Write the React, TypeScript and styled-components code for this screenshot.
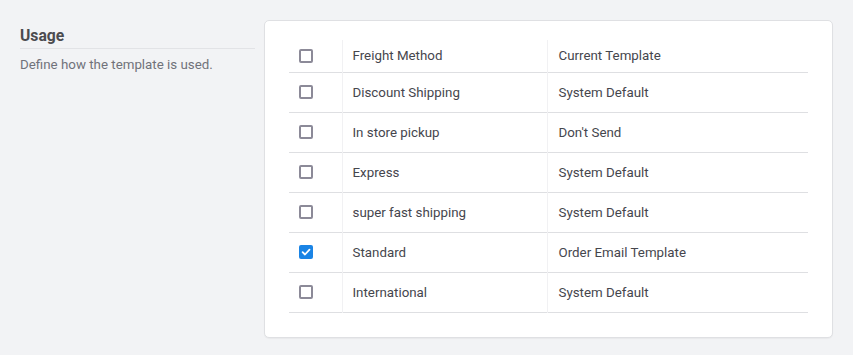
import styled, { createGlobalStyle } from "styled-components";

const GlobalStyle = createGlobalStyle`
  body {
    margin: 0;
    background: #f2f3f5;
    font-family: Roboto, "Liberation Sans", Arial, sans-serif;
  }
`;

type Row = { method: string; template: string; checked?: boolean };

const rows: Row[] = [
  { method: "Discount Shipping", template: "System Default" },
  { method: "In store pickup", template: "Don't Send" },
  { method: "Express", template: "System Default" },
  { method: "super fast shipping", template: "System Default" },
  { method: "Standard", template: "Order Email Template", checked: true },
  { method: "International", template: "System Default" },
];

const CheckBox = ({ checked }: { checked?: boolean }) => (
  <Box $checked={checked}>
    {checked && (
      <svg width="10" height="10" viewBox="0 0 10 10">
        <path
          d="M1.6 5.2 L4 7.5 L8.5 2.6"
          fill="none"
          stroke="#fff"
          strokeWidth="1.8"
          strokeLinecap="round"
          strokeLinejoin="round"
        />
      </svg>
    )}
  </Box>
);

export default function App() {
  return (
    <Page>
      <GlobalStyle />
      <Side>
        <Title>Usage</Title>
        <Desc>Define how the template is used.</Desc>
      </Side>
      <Card>
        <Table>
          <thead>
            <tr>
              <CheckCell as="th">
                <CheckBox />
              </CheckCell>
              <Cell as="th" $first>Freight Method</Cell>
              <Cell as="th">Current Template</Cell>
            </tr>
          </thead>
          <tbody>
            {rows.map((r) => (
              <tr key={r.method}>
                <CheckCell>
                  <CheckBox checked={r.checked} />
                </CheckCell>
                <Cell $first>{r.method}</Cell>
                <Cell>{r.template}</Cell>
              </tr>
            ))}
          </tbody>
        </Table>
      </Card>
    </Page>
  );
}

const Page = styled.div`
  display: flex;
  align-items: flex-start;
  gap: 9px;
  padding: 20px 20px 17px 20px;
`;

const Side = styled.div`
  width: 235px;
  padding-top: 6px;
  flex-shrink: 0;
`;

const Title = styled.h3`
  margin: 0;
  font-size: 15.7px;
  font-weight: 700;
  color: #4b4b4f;
  padding-bottom: 3px;
  border-bottom: 1px solid #e2e3e6;
`;

const Desc = styled.p`
  margin: 8px 0 0;
  font-size: 13.33px;
  color: #70727a;
`;

const Card = styled.div`
  flex: 1;
  background: #fff;
  border: 1px solid #dfe0e3;
  border-radius: 5px;
  box-shadow: 0 1px 1px rgba(0, 0, 0, 0.04);
  padding: 19px 24px 24px;
`;

const Table = styled.table`
  width: 100%;
  border-collapse: collapse;
  font-size: 13.33px;
  color: #45464d;

  tr {
    height: 40px;
    border-bottom: 1px solid #dedfe2;
  }
  thead tr {
    height: 32px;
  }
  th {
    font-weight: 400;
    text-align: left;
    padding-top: 0;
  }
`;

const CheckCell = styled.td`
  width: 53px;
  padding: 0 0 0 10px;
  border-right: 1px solid #f1f1f3;
  vertical-align: middle;
  box-sizing: border-box;
`;

const Cell = styled.td<{ $first?: boolean }>`
  padding: 0 11px 0 ${(p) => (p.$first ? "10px" : "11px")};
  width: ${(p) => (p.$first ? "205px" : "auto")};
  border-right: ${(p) => (p.$first ? "1px solid #f1f1f3" : "none")};
  vertical-align: middle;
  box-sizing: border-box;
`;

const Box = styled.span<{ $checked?: boolean }>`
  display: flex;
  align-items: center;
  justify-content: center;
  width: 14px;
  height: 14px;
  box-sizing: border-box;
  border-radius: 2px;
  border: ${(p) => (p.$checked ? "none" : "2px solid #8c8a98")};
  background: ${(p) => (p.$checked ? "#1a84e5" : "#fff")};
`;
